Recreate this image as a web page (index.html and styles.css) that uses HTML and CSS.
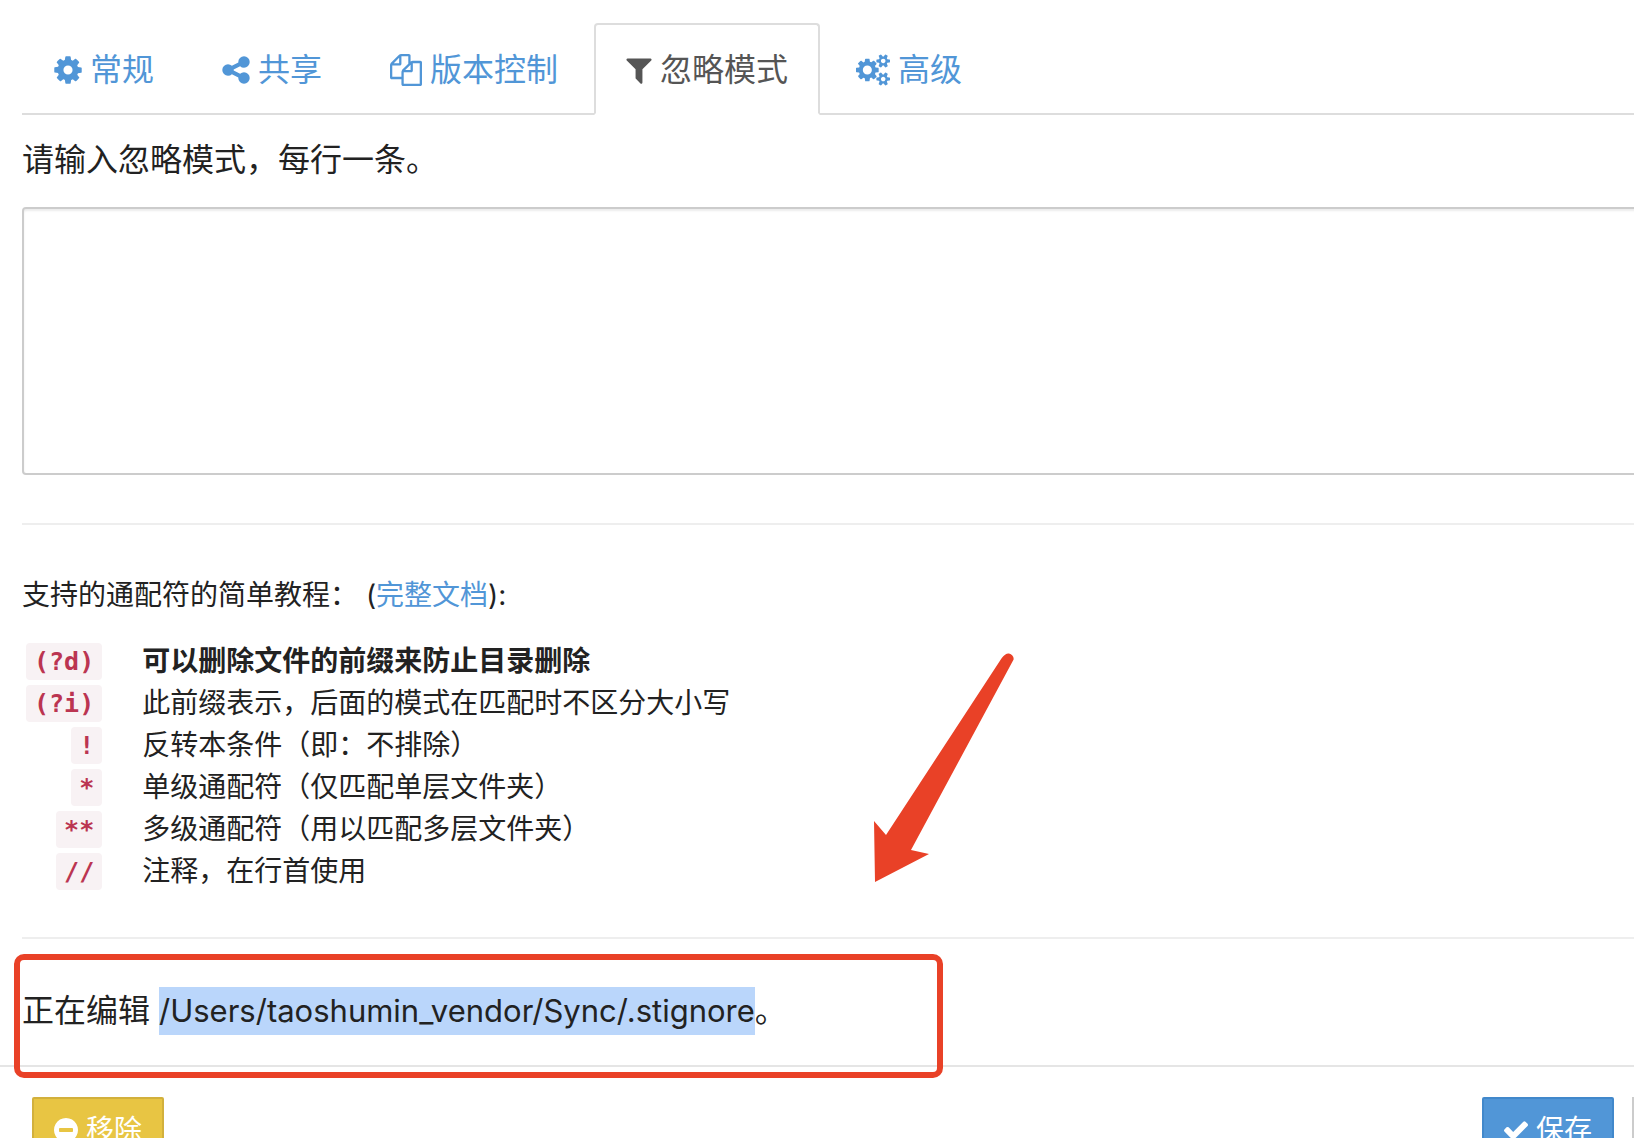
FILE: index.html
```html
<!DOCTYPE html>
<html lang="zh-CN">
<head>
    <meta charset="UTF-8">
    <meta name="viewport" content="width=device-width, initial-scale=1.0">
    <title>忽略模式</title>
    <link rel="stylesheet" href="styles.css">
</head>
<body>
    <div class="modal">
        <nav class="tabs">
            <a href="#general">
                <svg class="icon w28" viewBox="0 0 1536 1792"><path transform="matrix(1 0 0 -1 0 1536)" d="M1024 640q0 -106 -75 -181t-181 -75t-181 75t-75 181t75 181t181 75t181 -75t75 -181zM1536 749v-222q0 -12 -8 -23t-20 -13l-185 -28q-19 -54 -39 -91q35 -50 107 -138q10 -12 10 -25t-9 -23q-27 -37 -99 -108t-94 -71q-12 0 -26 9l-138 108q-44 -23 -91 -38q-16 -136 -29 -186q-7 -28 -36 -28h-222q-14 0 -24.5 8.5t-11.5 21.5l-28 184q-49 16 -90 37l-141 -107q-10 -9 -25 -9q-14 0 -25 11q-126 114 -165 168q-7 10 -7 23q0 12 8 23q15 21 51 66.5t54 70.5q-27 50 -41 99l-183 27q-13 2 -21 12.5t-8 23.5v222q0 12 8 23t19 13l186 28q14 46 39 92q-40 57 -107 138q-10 12 -10 24q0 10 9 23q26 36 98.5 107.5t94.5 71.5q13 0 26 -10l138 -107q44 23 91 38q16 136 29 186q7 28 36 28h222q14 0 24.5 -8.5t11.5 -21.5l28 -184q49 -16 90 -37l142 107q9 9 24 9q13 0 25 -10q129 -119 165 -170q7 -8 7 -22q0 -12 -8 -23q-15 -21 -51 -66.5t-54 -70.5q26 -50 41 -98l183 -28q13 -2 21 -12.5t8 -23.5z"/></svg>
                <span>常规</span>
            </a>
            <a href="#sharing">
                <svg class="icon w28" viewBox="0 0 1536 1792"><path transform="matrix(1 0 0 -1 0 1536)" d="M1216 512q133 0 226.5 -93.5t93.5 -226.5t-93.5 -226.5t-226.5 -93.5t-226.5 93.5t-93.5 226.5q0 12 2 34l-360 180q-92 -86 -218 -86q-133 0 -226.5 93.5t-93.5 226.5t93.5 226.5t226.5 93.5q126 0 218 -86l360 180q-2 22 -2 34q0 133 93.5 226.5t226.5 93.5t226.5 -93.5t93.5 -226.5t-93.5 -226.5t-226.5 -93.5q-126 0 -218 86l-360 -180q2 -22 2 -34t-2 -34l360 -180q92 86 218 86z"/></svg>
                <span>共享</span>
            </a>
            <a href="#versioning">
                <svg class="icon w32" viewBox="0 0 1792 1792"><path transform="matrix(1 0 0 -1 0 1536)" d="M1696 1152q40 0 68 -28t28 -68v-1216q0 -40 -28 -68t-68 -28h-960q-40 0 -68 28t-28 68v288h-544q-40 0 -68 28t-28 68v672q0 40 20 88t48 76l408 408q28 28 76 48t88 20h416q40 0 68 -28t28 -68v-328q68 40 128 40h416zM1152 939l-299 -299h299v299zM512 1323l-299 -299h299v299zM708 676l316 316v416h-384v-416q0 -40 -28 -68t-68 -28h-416v-640h512v256q0 40 20 88t48 76zM1664 -128v1152h-384v-416q0 -40 -28 -68t-68 -28h-416v-640h896z"/></svg>
                <span>版本控制</span>
            </a>
            <a href="#ignores" class="active">
                <svg class="icon w26" viewBox="0 0 1408 1792"><path transform="matrix(1 0 0 -1 0 1536)" d="M1403 1241q17 -41 -14 -70l-493 -493v-742q0 -42 -39 -59q-13 -5 -25 -5q-27 0 -45 19l-256 256q-19 19 -19 45v486l-493 493q-31 29 -14 70q17 39 59 39h1280q42 0 59 -39z"/></svg>
                <span>忽略模式</span>
            </a>
            <a href="#advanced">
                <svg class="icon w34" viewBox="0 0 1920 1792"><path transform="matrix(1 0 0 -1 0 1536)" d="M896 640q0 106 -75 181t-181 75t-181 -75t-75 -181t75 -181t181 -75t181 75t75 181zM1664 128q0 52 -38 90t-90 38t-90 -38t-38 -90q0 -53 37.5 -90.5t90.5 -37.5t90.5 37.5t37.5 90.5zM1664 1152q0 52 -38 90t-90 38t-90 -38t-38 -90q0 -53 37.5 -90.5t90.5 -37.5t90.5 37.5t37.5 90.5zM1280 731v-185q0 -10 -7 -19.5t-16 -10.5l-155 -24q-11 -35 -32 -76q34 -48 90 -115q7 -11 7 -20q0 -12 -7 -19q-23 -30 -82.5 -89.5t-78.5 -59.5q-11 0 -21 7l-115 90q-37 -19 -77 -31q-11 -108 -23 -155q-7 -24 -30 -24h-186q-11 0 -20 7.5t-10 17.5l-23 153q-34 10 -75 31l-118 -89q-7 -7 -20 -7q-11 0 -21 8q-144 133 -144 160q0 9 7 19q10 14 41 53t47 61q-23 44 -35 82l-152 24q-10 1 -17 9.5t-7 19.5v185q0 10 7 19.5t16 10.5l155 24q11 35 32 76q-34 48 -90 115q-7 11 -7 20q0 12 7 20q22 30 82 89t79 59q11 0 21 -7l115 -90q34 18 77 32q11 108 23 154q7 24 30 24h186q11 0 20 -7.5t10 -17.5l23 -153q34 -10 75 -31l118 89q8 7 20 7q11 0 21 -8q144 -133 144 -160q0 -8 -7 -19q-12 -16 -42 -54t-45 -60q23 -48 34 -82l152 -23q10 -2 17 -10.5t7 -19.5zM1920 198v-140q0 -16 -149 -31q-12 -27 -30 -52q51 -113 51 -138q0 -4 -4 -7q-122 -71 -124 -71q-8 0 -46 47t-52 68q-20 -2 -30 -2t-30 2q-14 -21 -52 -68t-46 -47q-2 0 -124 71q-4 3 -4 7q0 25 51 138q-18 25 -30 52q-149 15 -149 31v140q0 16 149 31q13 29 30 52q-51 113 -51 138q0 4 4 7q4 2 35 20t59 34t30 16q8 0 46 -46.5t52 -67.5q20 2 30 2t30 -2q51 71 92 112l6 2q4 0 124 -70q4 -3 4 -7q0 -25 -51 -138q17 -23 30 -52q149 -15 149 -31zM1920 1222v-140q0 -16 -149 -31q-12 -27 -30 -52q51 -113 51 -138q0 -4 -4 -7q-122 -71 -124 -71q-8 0 -46 47t-52 68q-20 -2 -30 -2t-30 2q-14 -21 -52 -68t-46 -47q-2 0 -124 71q-4 3 -4 7q0 25 51 138q-18 25 -30 52q-149 15 -149 31v140q0 16 149 31q13 29 30 52q-51 113 -51 138q0 4 4 7q4 2 35 20t59 34t30 16q8 0 46 -46.5t52 -67.5q20 2 30 2t30 -2q51 71 92 112l6 2q4 0 124 -70q4 -3 4 -7q0 -25 -51 -138q17 -23 30 -52q149 -15 149 -31z"/></svg>
                <span>高级</span>
            </a>
        </nav>

        <div class="modal-body">
            <label for="ignores">请输入忽略模式，每行一条。</label>
            <textarea id="ignores"></textarea>
            <hr>

            <div class="help">
                <p>支持的通配符的简单教程： (<a href="#docs">完整文档</a>):</p>
                <table>
                    <tr>
                        <th><code>(?d)</code></th>
                        <td><b>可以删除文件的前缀来防止目录删除</b></td>
                    </tr>
                    <tr>
                        <th><code>(?i)</code></th>
                        <td>此前缀表示，后面的模式在匹配时不区分大小写</td>
                    </tr>
                    <tr>
                        <th><code>!</code></th>
                        <td>反转本条件（即：不排除）</td>
                    </tr>
                    <tr>
                        <th><code>*</code></th>
                        <td>单级通配符（仅匹配单层文件夹）</td>
                    </tr>
                    <tr>
                        <th><code>**</code></th>
                        <td>多级通配符（用以匹配多层文件夹）</td>
                    </tr>
                    <tr>
                        <th><code>//</code></th>
                        <td>注释，在行首使用</td>
                    </tr>
                </table>
                <svg class="arrow" viewBox="0 0 142 230"><path d="M0 168L12 182L127.6 5.2C130 2 133 0 135 0.5C138 1 140 4 139.6 6.5L37 197L55 201L1 229Z"/></svg>
            </div>
            <hr>

            <div class="editing">
                <p>正在编辑 <mark>/Users/taoshumin_vendor/Sync/.stignore</mark>。</p>
                <div class="frame"></div>
            </div>
        </div>

        <div class="modal-footer">
            <button type="button" class="remove">
                <svg class="icon" viewBox="0 0 1536 1792"><path transform="matrix(1 0 0 -1 0 1536)" d="M1216 576v128q0 26 -19 45t-45 19h-768q-26 0 -45 -19t-19 -45v-128q0 -26 19 -45t45 -19h768q26 0 45 19t19 45zM1536 640q0 -209 -103 -385.5t-279.5 -279.5t-385.5 -103t-385.5 103t-279.5 279.5t-103 385.5t103 385.5t279.5 279.5t385.5 103t385.5 -103t279.5 -279.5t103 -385.5z"/></svg>
                <span>移除</span>
            </button>
            <button type="button" class="save">
                <svg class="icon" viewBox="121 0 1550 1792"><path transform="matrix(1 0 0 -1 0 1536)" d="M1671 970q0 -40 -28 -68l-724 -724l-136 -136q-28 -28 -68 -28t-68 28l-136 136l-362 362q-28 28 -28 68t28 68l136 136q28 28 68 28t68 -28l294 -295l656 657q28 28 68 28t68 -28l136 -136q28 -28 28 -68z"/></svg>
                <span>保存</span>
            </button>
            <button type="button" class="close" aria-label="关闭"></button>
        </div>
    </div>
</body>
</html>
```
FILE: styles.css
```css
*{
    padding: 0;
    margin: 0;
    box-sizing: border-box;
}
body{
    height: 100vh;
    overflow: hidden;
    background-color: #fff;
    color: #222;
    font-family: Inter, "Noto Sans CJK SC", sans-serif;
    font-size: 32px;
    line-height: 46px;
}
a{
    color: #5196d7;
    text-decoration: none;
}
/* the dialog is wider than the window and runs out on the right */
.modal{
    margin-right: -162px;
    padding-top: 23px;
}
.icon{
    height: 32px;
    fill: currentColor;
    fill-rule: evenodd;
    flex: none;
}
.w26{
    width: 26px;
}
.w28{
    width: 28px;
}
.w32{
    width: 32px;
}
.w34{
    width: 34px;
}
.tabs{
    display: flex;
    gap: 4px;
    margin-left: 22px;
    border-bottom: 2px solid #ddd;
}
.tabs a{
    display: flex;
    align-items: center;
    gap: 8px;
    height: 92px;
    padding: 2px 30px 0;
    margin-bottom: -2px;
    border: 2px solid transparent;
    border-radius: 4px 4px 0 0;
}
.tabs .active{
    color: #555;
    background-color: #fff;
    border-color: #ddd;
    border-bottom-color: #fff;
}
.modal-body{
    padding: 22px 22px 30px;
}
label{
    display: block;
    margin-bottom: 24px;
}
textarea{
    display: block;
    width: 100%;
    height: 268px;
    margin-bottom: 48px;
    padding: 12px 24px;
    font: inherit;
    border: 2px solid #ccc;
    border-radius: 4px;
    outline: none;
    resize: none;
    box-shadow: inset 0 2px 2px rgba(0, 0, 0, 0.08);
}
hr{
    border: none;
    border-top: 2px solid #eee;
}
.help{
    position: relative;
    margin: 50px 0 45px;
    font-size: 28px;
    line-height: 40px;
}
.help p{
    margin-bottom: 25px;
}
table{
    border-collapse: collapse;
}
tr{
    height: 42px;
}
th{
    text-align: right;
    padding: 0 40px 0 4px;
}
td{
    white-space: nowrap;
}
code{
    display: block;
    width: fit-content;
    margin-left: auto;
    padding: 0 8px;
    font: bold 25px/37px "DejaVu Sans Mono", monospace;
    color: #bb3551;
    background-color: #f8f2f4;
    border-radius: 4px;
}
.arrow{
    position: absolute;
    left: 852px;
    top: 78px;
    width: 142px;
    height: 230px;
    fill: #e94127;
}
.editing{
    position: relative;
    margin-top: 48px;
    line-height: 48px;
}
mark{
    display: inline-block;
    font-size: 31px;
    color: inherit;
    background-color: #bad6fb;
}
.frame{
    position: absolute;
    left: -8px;
    top: -33px;
    width: 929px;
    height: 124px;
    border: 6px solid #e94127;
    border-radius: 10px;
}
.modal-footer{
    display: flex;
    gap: 18px;
    padding: 30px 32px;
    border-top: 2px solid #e5e5e5;
}
button{
    display: flex;
    align-items: center;
    justify-content: center;
    gap: 8px;
    width: 132px;
    height: 66px;
    font: inherit;
    font-size: 28px;
    color: #fff;
    border: 2px solid #ccc;
    background-color: #fff;
    cursor: pointer;
}
button .icon{
    width: 24px;
    height: 28px;
}
.remove{
    margin-right: auto;
    background-color: #e8c543;
    border-color: #d2b03c;
    border-radius: 2px;
}
.save{
    background-color: #5196d7;
    border-color: #4188cb;
    border-radius: 2px;
}
```
